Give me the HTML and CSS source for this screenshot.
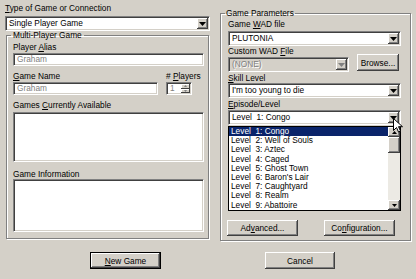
FILE: index.html
```html
<!DOCTYPE html>
<html lang="en">
<head>
    <meta charset="UTF-8">
    <title>Launch Game</title>
    <link rel="stylesheet" href="styles.css">
</head>
<body>
    <div class="dialog">
        <div class="columns">
            <div class="col-left">
                <div class="label top-label"><u>T</u>ype of Game or Connection</div>
                <div class="combo top-combo">
                    <span class="combo-text">Single Player Game</span>
                    <span class="drop-btn"><svg width="7" height="4" viewBox="0 0 7 4"><path d="M0 0h7l-3.5 4z"/></svg></span>
                </div>

                <fieldset class="group multi">
                    <legend>Multi-Player Game</legend>
                    <div class="label">Player <u>A</u>lias</div>
                    <div class="field">Graham</div>

                    <div class="name-row">
                        <div class="name-col">
                            <div class="label"><u>G</u>ame Name</div>
                            <div class="field">Graham</div>
                        </div>
                        <div class="players-col">
                            <div class="label"># <u>P</u>layers</div>
                            <div class="spinner">
                                <span class="spin-text">1</span>
                                <span class="spin-btns">
                                    <span class="spin-btn"><svg width="3" height="2" viewBox="0 0 3 2"><path d="M0 2h3l-1.5-2z"/></svg></span>
                                    <span class="spin-btn"><svg width="3" height="2" viewBox="0 0 3 2"><path d="M0 0h3l-1.5 2z"/></svg></span>
                                </span>
                            </div>
                        </div>
                    </div>

                    <div class="label games-label">Games <u>C</u>urrently Available</div>
                    <div class="listbox games"></div>

                    <div class="label info-label">Game Information</div>
                    <div class="listbox info"></div>
                </fieldset>
            </div>

            <div class="col-right">
                <fieldset class="group params">
                    <legend>Game Parameters</legend>
                    <div class="label">Game <u>W</u>AD file</div>
                    <div class="combo spaced">
                        <span class="combo-text">PLUTONIA</span>
                        <span class="drop-btn"><svg width="7" height="4" viewBox="0 0 7 4"><path d="M0 0h7l-3.5 4z"/></svg></span>
                    </div>

                    <div class="label">Custom WAD <u>F</u>ile</div>
                    <div class="custom-row">
                        <div class="combo disabled">
                            <span class="combo-text">(NONE)</span>
                            <span class="drop-btn"><svg width="7" height="4" viewBox="0 0 7 4"><path d="M0 0h7l-3.5 4z"/></svg></span>
                        </div>
                        <button class="btn browse">Browse...</button>
                    </div>

                    <div class="label next-label"><u>S</u>kill Level</div>
                    <div class="combo">
                        <span class="combo-text">I'm too young to die</span>
                        <span class="drop-btn"><svg width="7" height="4" viewBox="0 0 7 4"><path d="M0 0h7l-3.5 4z"/></svg></span>
                    </div>

                    <div class="label next-label"><u>E</u>pisode/Level</div>
                    <div class="episode">
                        <div class="combo">
                            <span class="combo-text">Level  1: Congo</span>
                            <span class="drop-btn"><svg width="7" height="4" viewBox="0 0 7 4"><path d="M0 0h7l-3.5 4z"/></svg></span>
                        </div>

                        <div class="dropdown">
                            <ul class="items">
                                <li class="selected">Level  1: Congo</li>
                                <li>Level  2: Well of Souls</li>
                                <li>Level  3: Aztec</li>
                                <li>Level  4: Caged</li>
                                <li>Level  5: Ghost Town</li>
                                <li>Level  6: Baron's Lair</li>
                                <li>Level  7: Caughtyard</li>
                                <li>Level  8: Realm</li>
                                <li>Level  9: Abattoire</li>
                            </ul>
                            <div class="scrollbar">
                                <span class="scroll-btn"><svg width="5" height="3" viewBox="0 0 5 3"><path d="M0 3h5l-2.5-3z"/></svg></span>
                                <span class="thumb"></span>
                                <span class="track"></span>
                                <span class="scroll-btn"><svg width="5" height="3" viewBox="0 0 5 3"><path d="M0 0h5l-2.5 3z"/></svg></span>
                            </div>
                        </div>

                        <svg class="cursor" width="10" height="15" viewBox="0 0 10 15">
                            <path d="M0.5 0.5v12l3-3 2 4.5 2-1-2-4.3h4z" fill="#fff" stroke="#000" stroke-width="1"/>
                        </svg>
                    </div>

                    <div class="param-buttons">
                        <button class="btn">Ad<u>v</u>anced...</button>
                        <button class="btn">Co<u>n</u>figuration...</button>
                    </div>
                </fieldset>
            </div>
        </div>

        <div class="actions">
            <button class="btn default"><u>N</u>ew Game</button>
            <button class="btn">Cancel</button>
        </div>
    </div>
</body>
</html>
```

FILE: styles.css
```css
body {
    margin: 0;
    background: #d4d0c8;
    font-family: "Liberation Sans", Arial, sans-serif;
    font-size: 8.3px;
    color: #000;
}
.dialog {
    width: 416px;
    height: 279px;
    padding: 0 5px;
    box-sizing: border-box;
    overflow: hidden;
}
.columns {
    display: flex;
    gap: 10px;
}
.col-left {
    width: 205px;
}
.col-right {
    width: 191px;
}
.label {
    line-height: 10px;
    white-space: nowrap;
}
.top-label {
    margin-top: 3px;
}

/* sunken controls */
.combo,
.field,
.listbox,
.spinner {
    box-sizing: border-box;
    border: 1px solid;
    border-color: #808080 #fff #fff #808080;
    box-shadow: inset 1px 1px #404040, inset -1px -1px #d4d0c8;
    background: #fff;
}
.combo {
    height: 15px;
    padding: 1px;
    display: flex;
    align-items: center;
}
.top-combo {
    margin-top: 3px;
}
.combo-text {
    flex: 1;
    padding-left: 2px;
    line-height: 11px;
    white-space: pre;
}
.drop-btn {
    width: 11px;
    height: 11px;
    box-sizing: border-box;
    background: #d4d0c8;
    box-shadow: inset -1px -1px #404040, inset 1px 1px #fff, inset -2px -2px #808080;
    display: flex;
    align-items: center;
    justify-content: center;
}
.combo.disabled {
    background: #d4d0c8;
}
.combo.disabled .combo-text {
    color: #808080;
    text-shadow: 1px 1px #fff;
}
.combo.disabled .drop-btn svg {
    fill: #808080;
}
.field {
    height: 13px;
    margin-top: 1px;
    padding-left: 3px;
    line-height: 11px;
    color: #808080;
}

/* group boxes */
.group {
    margin: 0;
    min-width: 0;
    border: 1px solid #808080;
    box-shadow: inset 1px 1px #fff, 1px 1px #fff;
}
.group legend {
    line-height: 9px;
    padding: 0 2px;
    margin-left: -2px;
}
.multi {
    margin: 0 1px 0 1px;
    padding: 2px 4px 6px 6px;
}
.name-row {
    display: flex;
    gap: 8px;
    margin-top: 5px;
}
.name-col {
    width: 145px;
}
.players-col {
    flex: 1;
}
.spinner {
    width: 26px;
    height: 13px;
    margin-top: 1px;
    padding: 1px;
    display: flex;
    background: #fff;
}
.spin-text {
    flex: 1;
    padding-left: 2px;
    line-height: 9px;
    color: #808080;
}
.spin-btns {
    width: 9px;
    display: flex;
    flex-direction: column;
}
.spin-btn {
    flex: 1;
    background: #d4d0c8;
    box-shadow: inset -1px -1px #404040, inset 1px 1px #fff;
    display: flex;
    align-items: center;
    justify-content: center;
}
.spin-btn svg {
    fill: #808080;
}
.games-label {
    margin-top: 5px;
}
.games {
    height: 50px;
    margin-top: 2px;
}
.info-label {
    margin-top: 7px;
}
.info {
    height: 53px;
}

.params {
    margin: 9px 0 0 0;
    padding: 1px 9px 4px 7px;
}
.params legend {
    margin-left: -3px;
    padding: 0 1px;
}
.spaced {
    margin-top: 2px;
}
.custom-row {
    display: flex;
    align-items: flex-start;
    margin-top: 1px;
}
.custom-row .combo {
    width: 121px;
}
.next-label {
    margin-top: 1px;
}
.episode {
    position: relative;
    margin-top: 1px;
}
.dropdown {
    position: absolute;
    top: 16px;
    left: 0;
    width: 173px;
    height: 85px;
    box-sizing: border-box;
    border: 1px solid #000;
    background: #fff;
    display: flex;
}
.items {
    flex: 1;
    list-style: none;
    margin: 0;
    padding: 0;
}
.items li {
    height: 9.2px;
    line-height: 9.2px;
    padding-left: 2px;
    white-space: pre;
}
.items li.selected {
    background: #0a246a;
    color: #fff;
}
.scrollbar {
    width: 12px;
    display: flex;
    flex-direction: column;
    background: #eceae4;
}
.scroll-btn {
    height: 10px;
    background: #d4d0c8;
    box-shadow: inset -1px -1px #404040, inset 1px 1px #fff, inset -2px -2px #808080;
    display: flex;
    align-items: center;
    justify-content: center;
}
.thumb {
    height: 16px;
    background: #d4d0c8;
    box-shadow: inset -1px -1px #404040, inset 1px 1px #fff, inset -2px -2px #808080;
}
.track {
    flex: 1;
}
.cursor {
    position: absolute;
    left: 165px;
    top: 8px;
}
.param-buttons {
    display: flex;
    justify-content: space-between;
    width: 168px;
    margin: 95px 0 0 -1px;
}

/* buttons */
.btn {
    font-family: inherit;
    font-size: inherit;
    color: #000;
    background: #d4d0c8;
    border: none;
    padding: 0;
    margin: 0;
    box-shadow: inset -1px -1px #404040, inset 1px 1px #fff, inset -2px -2px #808080;
    line-height: 12px;
}
.param-buttons .btn {
    width: 71px;
    height: 16px;
}
.browse {
    width: 42px;
    height: 17px;
    margin: -3px 0 0 8px;
}
.actions {
    display: flex;
    gap: 104px;
    margin: 11px 0 0 85px;
}
.actions .btn {
    width: 70px;
    height: 17px;
}
.btn.default {
    width: 71px;
    border: 1px solid #000;
    box-shadow: inset -1px -1px #404040, inset 1px 1px #fff, inset -2px -2px #808080;
}
```
